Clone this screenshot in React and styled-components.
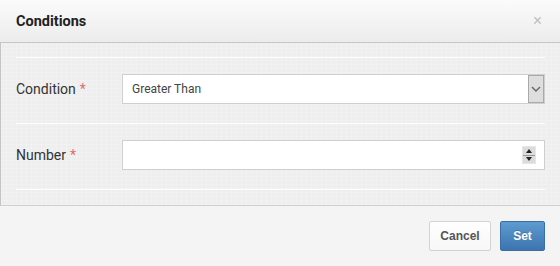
import React from "react";
import styled, { createGlobalStyle } from "styled-components";

const Global = createGlobalStyle`
  html, body {
    margin: 0;
    padding: 0;
    background: #f5f5f5;
  }
  body {
    font-family: Roboto, "Liberation Sans", Arial, sans-serif;
    color: #333;
  }
`;

const Modal = styled.div`
  width: 560px;
  height: 266px;
  display: flex;
  flex-direction: column;
  background: #f5f5f5;
  overflow: hidden;
`;

const Header = styled.div`
  height: 42px;
  flex: 0 0 auto;
  display: flex;
  align-items: center;
  justify-content: space-between;
  padding: 0 16px;
  background: linear-gradient(#fbfbfb, #ececec);
  border-bottom: 1px solid #c6c6c6;
`;

const Title = styled.h4`
  margin: 0;
  font-size: 14.5px;
  font-weight: 700;
  color: #222;
`;

const Close = styled.span`
  font-size: 16px;
  color: #bdbdbd;
  line-height: 1;
  margin-right: 2px;
  font-family: "Liberation Sans", Arial, sans-serif;
`;

const Body = styled.div`
  flex: 0 0 auto;
  padding: 14px 15px 15px 15px;
  border-left: 1px solid #c4c4c4;
  border-bottom: 1px solid #cfcfcf;
  background-color: #eeeeee;
  background-image: repeating-linear-gradient(
      0deg,
      rgba(255, 255, 255, 0.18) 0 1px,
      transparent 1px 4px
    ),
    repeating-linear-gradient(
      90deg,
      rgba(255, 255, 255, 0.18) 0 1px,
      transparent 1px 5px
    );
`;

const Form = styled.div`
  border-top: 1px solid #fdfdfd;
`;

const Row = styled.div`
  display: flex;
  align-items: center;
  padding: 16px 0 19px;
  border-bottom: 1px solid #fdfdfd;
`;

const Label = styled.label`
  width: 106px;
  flex: 0 0 auto;
  font-size: 14px;
  color: #333;
`;

const Required = styled.span`
  color: #e46b6b;
  margin-left: 4px;
`;

const Field = styled.div`
  flex: 1;
  height: 30px;
  box-sizing: border-box;
  background: #fff;
  border: 1px solid #cfcfcf;
  display: flex;
  align-items: center;
  padding-left: 9px;
  font-size: 12px;
  color: #444;
`;

const Value = styled.span`
  flex: 1;
`;

const DropButton = styled.div`
  width: 16px;
  height: 28px;
  box-sizing: border-box;
  border: 1px solid #a9a9a9;
  background: #dedede;
  display: flex;
  align-items: center;
  justify-content: center;
`;

const Spinner = styled.div`
  width: 14px;
  height: 18px;
  margin-right: 8px;
  display: flex;
  flex-direction: column;
  background: #dcdcdc;
  border: 1px solid #e6e6e6;
  box-sizing: border-box;
`;

const SpinHalf = styled.div`
  flex: 1;
  display: flex;
  align-items: center;
  justify-content: center;
  border-top: ${(p) => (p.$bottom ? "1px solid #999" : "none")};
`;

const Footer = styled.div`
  flex: 1;
  display: flex;
  justify-content: flex-end;
  align-items: flex-start;
  gap: 9px;
  padding: 15px 15px 0 0;
  background: #f4f4f4;
`;

const Button = styled.button`
  height: 30px;
  box-sizing: border-box;
  padding: 0 ${(p) => (p.$primary ? "12px" : "10px")};
  min-width: ${(p) => (p.$primary ? "45px" : "62px")};
  font-family: "Liberation Sans", Arial, sans-serif;
  font-size: 12px;
  font-weight: 700;
  border-radius: 2px;
  color: ${(p) => (p.$primary ? "#fff" : "#555")};
  border: 1px solid ${(p) => (p.$primary ? "#3a6fa6" : "#d3d3d3")};
  background: ${(p) =>
    p.$primary ? "linear-gradient(#5d9bd0, #3c74b0)" : "linear-gradient(#fff, #f7f7f7)"};
  text-shadow: ${(p) => (p.$primary ? "0 -1px 0 rgba(0,0,0,0.2)" : "none")};
`;

const Chevron = () => (
  <svg width="10" height="6" viewBox="0 0 10 6">
    <path d="M1 1 L5 5 L9 1" fill="none" stroke="#666" strokeWidth="1.4" />
  </svg>
);

const Tri = ({ down }) => (
  <svg width="6" height="4" viewBox="0 0 6 4">
    <path d={down ? "M0 0 H6 L3 4 Z" : "M0 4 H6 L3 0 Z"} fill="#222" />
  </svg>
);

const App = () => {
  return (
    <Modal>
      <Global />
      <Header>
        <Title>Conditions</Title>
        <Close>×</Close>
      </Header>
      <Body>
        <Form>
          <Row>
            <Label>
              Condition<Required>*</Required>
            </Label>
            <Field>
              <Value>Greater Than</Value>
              <DropButton>
                <Chevron />
              </DropButton>
            </Field>
          </Row>
          <Row>
            <Label>
              Number<Required>*</Required>
            </Label>
            <Field>
              <Value />
              <Spinner>
                <SpinHalf>
                  <Tri />
                </SpinHalf>
                <SpinHalf $bottom>
                  <Tri down />
                </SpinHalf>
              </Spinner>
            </Field>
          </Row>
        </Form>
      </Body>
      <Footer>
        <Button>Cancel</Button>
        <Button $primary>Set</Button>
      </Footer>
    </Modal>
  );
};

export default App;
